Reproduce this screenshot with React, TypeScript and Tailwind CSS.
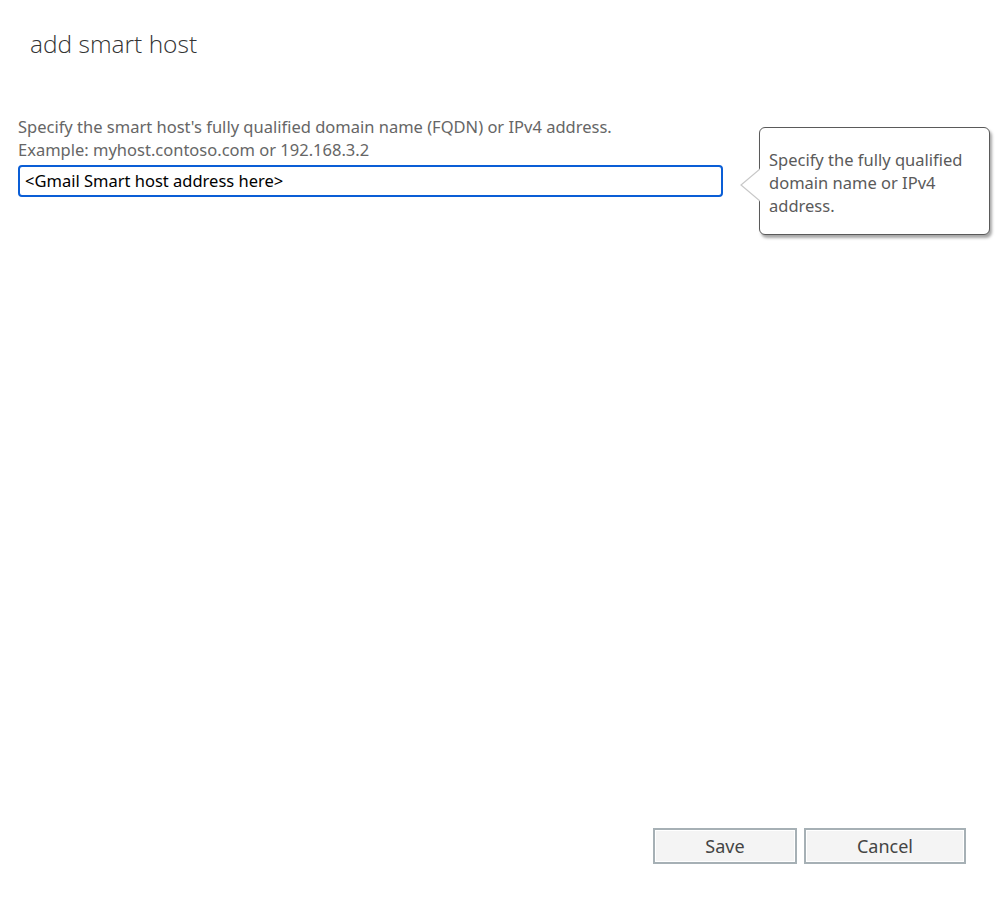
import React from "react";

const font = { fontFamily: '"Noto Sans", "Open Sans", sans-serif' };

const Callout = () => (
  <div className="absolute left-[740px] top-[127px] flex items-center">
    <svg width="20" height="34" viewBox="0 0 20 34" className="-mr-px mt-[8px] relative z-10">
      <path d="M20 1 L1 17 L20 33" fill="#fff" stroke="#c8c8c8" strokeWidth="1.2" />
    </svg>
    <div className="w-[231px] h-[108px] rounded-[6px] border border-[#5a5a5a] bg-white pl-[9px] pr-2 pt-[20px] text-[16.5px] leading-[23px] text-[#5a5a5a] shadow-[2px_3px_3px_rgba(0,0,0,0.35)]">
      Specify the fully qualified domain name or IPv4 address.
    </div>
  </div>
);

export default function App() {
  return (
    <div className="relative flex h-[898px] w-[999px] flex-col bg-white" style={font}>
      <h1
        className="pl-[30px] pt-[27px] text-[24.5px] font-light leading-[34px] text-[#333]"
        style={{ fontFamily: '"Open Sans", "Noto Sans", sans-serif' }}
      >
        add smart host
      </h1>
      <div className="mt-[54px] px-[18px]">
        <p className="text-[16.5px] leading-[23px] text-[#666]">
          Specify the smart host's fully qualified domain name (FQDN) or IPv4 address.
          <br />
          Example: myhost.contoso.com or 192.168.3.2
        </p>
        <div className="mt-[4px] flex h-[32px] w-[705px] items-center rounded-[4px] border-2 border-[#0a5ed6] px-[5px] text-[16.5px] text-black">
          &lt;Gmail Smart host address here&gt;
        </div>
      </div>
      <Callout />
      <div className="mt-auto mb-[34px] flex justify-end gap-[7px] pr-[33px]">
        <button className="h-[36px] w-[144px] border-2 border-[#a6b0b5] bg-[#f4f4f4] text-[18px] text-[#444] shadow-[inset_0_0_0_1px_#fff]">
          Save
        </button>
        <button className="h-[36px] w-[162px] border-2 border-[#a6b0b5] bg-[#f4f4f4] text-[18px] text-[#444] shadow-[inset_0_0_0_1px_#fff]">
          Cancel
        </button>
      </div>
    </div>
  );
}
